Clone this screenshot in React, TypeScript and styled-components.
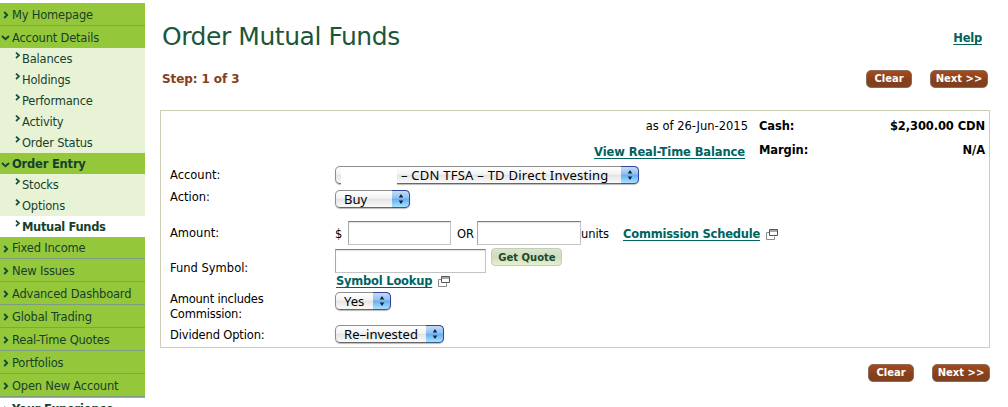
import React from "react";
import styled, { createGlobalStyle } from "styled-components";

const Global = createGlobalStyle`
  * { box-sizing: border-box; }
  html, body { margin: 0; background: #fff; }
  body { overflow: hidden; font-family: Verdana, "DejaVu Sans", sans-serif; font-size: 12px; line-height: 15px; color: #000; }
`;

const Page = styled.div`
  display: flex;
  width: 1008px;
  height: 407px;
  overflow: hidden;
`;

const Sidebar = styled.nav`
  width: 145px;
  padding-top: 3px;
  flex: none;
`;

const NavItem = styled.a<{ $h: number; $line?: boolean; $bold?: boolean; $plain?: boolean }>`
  display: flex;
  align-items: center;
  gap: 3px;
  padding: 2px 0 0 3px;
  height: ${(p) => p.$h}px;
  background: ${(p) => (p.$plain ? "#fff" : "#94c83a")};
  border-bottom: ${(p) => (p.$line ? "1px solid #7d9d83" : "0")};
  color: #173f2c;
  white-space: nowrap;
  font-weight: ${(p) => (p.$bold ? 700 : 400)};
  font-size: 11.5px;
  letter-spacing: -0.2px;
  &[data-open="true"] { gap: 2px; padding-left: 1px; }
`;

const SubItem = styled.a<{ $active?: boolean }>`
  display: flex;
  align-items: center;
  gap: 1px;
  height: 21px;
  padding: 2px 0 0 15px;
  background: ${(p) => (p.$active ? "#fff" : "#e8f3d6")};
  color: #173f2c;
  white-space: nowrap;
  font-weight: ${(p) => (p.$active ? 700 : 400)};
  font-size: 11.5px;
  letter-spacing: ${(p) => (p.$active ? -0.35 : -0.2)}px;
  svg { margin-bottom: 9px; }
`;

const NavEnd = styled.div`
  height: 1px;
  background: #94c83a;
`;

const Main = styled.main`
  flex: 1;
  padding-left: 15px;
`;

const Header = styled.header`
  display: flex;
  justify-content: space-between;
  width: 822px;
  height: 65px;
  padding: 21px 0 0 2px;
`;

const Title = styled.h1`
  margin: 0;
  font-size: 25px;
  line-height: 32px;
  font-weight: 400;
  letter-spacing: -0.45px;
  color: #1c5639;
`;

const Link = styled.a<{ $ls?: number }>`
  color: #00635d;
  font-weight: 700;
  font-size: 11.5px;
  letter-spacing: ${(p) => p.$ls ?? -0.22}px;
  text-decoration: underline;
  text-decoration-thickness: 1px;
  text-underline-offset: 2px;
  white-space: nowrap;
`;

const HelpSlot = styled.div`
  padding-top: 10px;
`;

const StepBar = styled.div`
  display: flex;
  justify-content: space-between;
  width: 828px;
  height: 45px;
  padding: 5px 0 0 2px;
`;

const StepText = styled.div`
  padding-top: 2px;
  color: #83401b;
  font-weight: 700;
  font-size: 12px;
  letter-spacing: -0.1px;
`;

const Actions = styled.div<{ $top?: number; $right?: number }>`
  display: flex;
  justify-content: flex-end;
  gap: 18px;
  width: ${(p) => (p.$right ? `${p.$right}px` : "auto")};
  padding-top: ${(p) => p.$top ?? 0}px;
`;

const BrownButton = styled.button<{ $w: number }>`
  width: ${(p) => p.$w}px;
  height: 18px;
  padding: 0 0 1px;
  border: 1px solid #8a6a58;
  border-radius: 5px;
  background: linear-gradient(#a84a1a, #84401c 60%, #80401e);
  color: #fff;
  font: 700 10px/14px Verdana, "DejaVu Sans", sans-serif;
`;

const Panel = styled.section`
  width: 830px;
  height: 238px;
  border: 1px solid #ccceb6;
`;

const Balances = styled.div`
  display: grid;
  grid-template-columns: 588px 1fr auto;
  grid-template-rows: 24px 21px;
  padding: 8px 4px 0 0;
`;

const Cell = styled.div<{ $end?: number; $top?: number; $bold?: boolean; $left?: number }>`
  padding: ${(p) => p.$top ?? 0}px ${(p) => p.$end ?? 0}px 0 ${(p) => p.$left ?? 0}px;
  text-align: ${(p) => (p.$end !== undefined ? "right" : "left")};
  font-weight: ${(p) => (p.$bold ? 700 : 400)};
  font-size: 11.5px;
  letter-spacing: ${(p) => (p.$bold ? -0.1 : 0)}px;
  white-space: nowrap;
`;

const Row = styled.div<{ $h: number }>`
  display: flex;
  height: ${(p) => p.$h}px;
`;

const Label = styled.label<{ $top: number; $ls?: number }>`
  width: 174px;
  padding: ${(p) => p.$top}px 0 0 9px;
  font-size: 11.5px;
  letter-spacing: ${(p) => p.$ls ?? 0}px;
`;

const Field = styled.div<{ $top: number }>`
  display: flex;
  align-items: flex-start;
  padding-top: ${(p) => p.$top}px;
`;

const FieldStack = styled.div`
  display: flex;
  flex-direction: column;
`;

const Inline = styled.span<{ $w: number; $left?: number }>`
  width: ${(p) => p.$w}px;
  padding: 6px 0 0 ${(p) => p.$left ?? 0}px;
  font-size: 11.5px;
  letter-spacing: -0.1px;
  white-space: nowrap;
`;

const TextInput = styled.input<{ $w: number }>`
  width: ${(p) => p.$w}px;
  height: 24px;
  padding: 2px 4px;
  border: 1px solid #c4c4c4;
  border-top-color: #7e7e7e;
  border-left-color: #a9a9a9;
  border-radius: 0;
  box-shadow: inset 0 1px 1px #e2e2e2;
  background: #fff;
  outline: none;
`;

const SelectBox = styled.div<{ $w: number; $ls?: number }>`
  display: flex;
  width: ${(p) => p.$w}px;
  height: 18px;
  border: 1px solid #8d8d8d;
  border-bottom-color: #666;
  border-radius: 5px;
  background: linear-gradient(#fff, #f3f3f3 45%, #e4e4e4 50%, #fafafa);
  box-shadow: 0 1px 1px #bbb;
  font: 13px/16px "Lucida Grande", "Noto Sans", sans-serif;
  letter-spacing: ${(p) => p.$ls ?? 0}px;
  white-space: nowrap;
`;

const SelectText = styled.span<{ $left?: number }>`
  padding-left: ${(p) => p.$left ?? 8}px;
`;

const Redacted = styled.span`
  width: 56px;
  height: 19px;
  margin: 0 0 0 5px;
  background: #fff;
  flex: none;
`;

const Stepper = styled.span`
  display: flex;
  align-items: center;
  justify-content: center;
  flex: none;
  width: 18px;
  height: 18px;
  margin: -1px -1px 0 auto;
  border: 1px solid #3344a0;
  border-left: 0;
  border-bottom-color: #385c85;
  border-radius: 0 5px 5px 0;
  background: linear-gradient(#c4dcf6, #8fc0f0 45%, #64aef0 50%, #a8e2ff);
`;

const QuoteButton = styled.button`
  width: 71px;
  height: 18px;
  margin: -1px 0 0 5px;
  padding: 1px 0 0 1px;
  border: 1px solid #c3ceb4;
  border-radius: 4px;
  background: linear-gradient(#dbe5cf, #cfdcbc 50%, #e6f1d0);
  color: #1a4a2c;
  font: 700 10px/14px Verdana, "DejaVu Sans", sans-serif;
`;

const LinkLine = styled.div<{ $left: number; $top: number }>`
  display: flex;
  gap: 6px;
  padding: ${(p) => p.$top}px 0 0 ${(p) => p.$left}px;
  svg { margin-top: 2px; }
`;

const ChevronRight = () => (
  <svg width="6" height="8" viewBox="0 0 6 8" fill="none" stroke="#0f4a35" strokeWidth="1.8">
    <path d="M1.2 1 4.2 4 1.2 7" />
  </svg>
);

const ChevronDown = () => (
  <svg width="9" height="6" viewBox="0 0 9 6" fill="none" stroke="#0f4a35" strokeWidth="1.9">
    <path d="M1 1 4.5 4.2 8 1" />
  </svg>
);

const ChevronSmall = () => (
  <svg width="6" height="7" viewBox="0 0 6 7" fill="none" stroke="#1a5040" strokeWidth="1.7">
    <path d="M1 .6 4 3.3 1 6" />
  </svg>
);

const WindowIcon = () => (
  <svg width="12" height="11" viewBox="0 0 12 11" fill="none">
    <path d="M3.5 3.5h-3v7h8v-3" stroke="#8a8a8a" />
    <path d="M3.5 .5h8v6h-8zM3.5 2h8" stroke="#555" />
  </svg>
);

const Select = ({ w, ls, children }: { w: number; ls?: number; children: React.ReactNode }) => (
  <SelectBox $w={w} $ls={ls}>
    {children}
    <Stepper>
      <svg width="6" height="10" viewBox="0 0 6 10" fill="#10233f">
        <path d="M3 0 5.3 3.5H.7zM3 10 5.3 6.5H.7z" />
      </svg>
    </Stepper>
  </SelectBox>
);

const accountLinks = ["Balances", "Holdings", "Performance", "Activity", "Order Status"];
const lowerLinks = ["Fixed Income", "New Issues", "Advanced Dashboard", "Global Trading", "Real-Time Quotes", "Portfolios", "Open New Account"];

export default function App() {
  return (
    <Page>
      <Global />
      <Sidebar>
        <NavItem $h={23} $line><ChevronRight />My Homepage</NavItem>
        <NavItem $h={22} data-open="true"><ChevronDown />Account Details</NavItem>
        {accountLinks.map((t) => (
          <SubItem key={t}><ChevronSmall />{t}</SubItem>
        ))}
        <NavItem $h={21} $bold data-open="true"><ChevronDown />Order Entry</NavItem>
        <SubItem><ChevronSmall />Stocks</SubItem>
        <SubItem><ChevronSmall />Options</SubItem>
        <SubItem $active><ChevronSmall />Mutual Funds</SubItem>
        {lowerLinks.map((t, i) => (
          <NavItem key={t} $h={i === 0 ? 22 : 23} $line><ChevronRight />{t}</NavItem>
        ))}
        <NavEnd />
        <NavItem $h={21} $bold $plain><ChevronRight />Your Experience</NavItem>
      </Sidebar>
      <Main>
        <Header>
          <Title>Order Mutual Funds</Title>
          <HelpSlot><Link>Help</Link></HelpSlot>
        </Header>
        <StepBar>
          <StepText>Step: 1 of 3</StepText>
          <Actions>
            <BrownButton $w={46}>Clear</BrownButton>
            <BrownButton $w={58}>Next &gt;&gt;</BrownButton>
          </Actions>
        </StepBar>
        <Panel>
          <Balances>
            <Cell $end={1}>as of 26-Jun-2015</Cell>
            <Cell $left={10} $bold>Cash:</Cell>
            <Cell $end={0} $bold>$2,300.00 CDN</Cell>
            <Cell $end={4} $top={2}><Link $ls={-0.1}>View Real-Time Balance</Link></Cell>
            <Cell $left={10} $bold>Margin:</Cell>
            <Cell $end={0} $bold>N/A</Cell>
          </Balances>
          <Row $h={24}>
            <Label $top={4}>Account:</Label>
            <Field $top={2}>
              <Select w={304} ls={0.24}>
                <Redacted />
                <SelectText $left={4}>– CDN TFSA – TD Direct Investing</SelectText>
              </Select>
            </Field>
          </Row>
          <Row $h={22}>
            <Label $top={2}>Action:</Label>
            <Field $top={2}><Select w={75}><SelectText>Buy</SelectText></Select></Field>
          </Row>
          <Row $h={37}>
            <Label $top={16}>Amount:</Label>
            <Field $top={11}>
              <Inline $w={13}>$</Inline>
              <TextInput $w={103} />
              <Inline $w={26} $left={6}>OR</Inline>
              <TextInput $w={104} />
              <Inline $w={41}>units</Inline>
              <LinkLine $left={1} $top={6}><Link>Commission Schedule</Link><WindowIcon /></LinkLine>
            </Field>
          </Row>
          <Row $h={43}>
            <Label $top={14}>Fund Symbol:</Label>
            <FieldStack>
              <Field $top={2}>
                <TextInput $w={151} />
                <QuoteButton>Get Quote</QuoteButton>
              </Field>
              <LinkLine $left={1} $top={1}><Link>Symbol Lookup</Link><WindowIcon /></LinkLine>
            </FieldStack>
          </Row>
          <Row $h={32}>
            <Label $top={2} $ls={-0.2}>Amount includes<br />Commission:</Label>
            <Field $top={2}><Select w={56}><SelectText>Yes</SelectText></Select></Field>
          </Row>
          <Row $h={25}>
            <Label $top={6} $ls={-0.15}>Dividend Option:</Label>
            <Field $top={3}><Select w={109} ls={0.05}><SelectText>Re–invested</SelectText></Select></Field>
          </Row>
        </Panel>
        <Actions $top={16} $right={830}>
          <BrownButton $w={46}>Clear</BrownButton>
          <BrownButton $w={58}>Next &gt;&gt;</BrownButton>
        </Actions>
      </Main>
    </Page>
  );
}
